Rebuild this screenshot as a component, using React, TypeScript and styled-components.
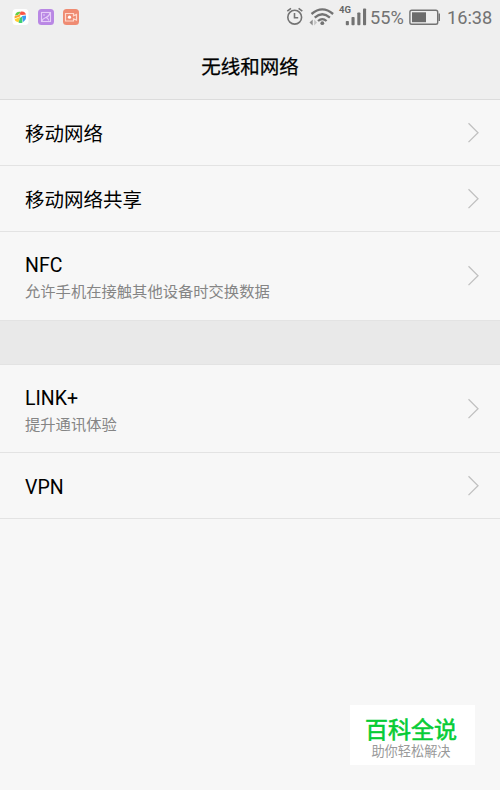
import React from "react";
import styled, { createGlobalStyle } from "styled-components";

const GlobalStyle = createGlobalStyle`
  body {
    margin: 0;
    background: #f7f7f7;
    font-family: Roboto, "Noto Sans CJK SC", sans-serif;
  }
`;

const Screen = styled.div`
  position: relative;
  width: 500px;
  height: 790px;
  overflow: hidden;
  background: #f7f7f7;
`;

const Header = styled.header`
  box-sizing: border-box;
  height: 100px;
  background: #efefef;
  border-bottom: 1px solid #dcdcdc;
`;

const StatusBar = styled.div`
  display: flex;
  justify-content: space-between;
  height: 34px;
  padding: 0 9px 0 12px;
  color: #737373;
`;

const AppIcons = styled.div`
  display: flex;
  gap: 9px;
  padding-top: 9px;

  svg {
    display: block;
  }
`;

const Indicators = styled.div`
  display: flex;
  align-items: flex-start;

  svg {
    display: block;
  }
`;

const StatusText = styled.span<{ $width: number }>`
  width: ${(p) => p.$width}px;
  font-size: 18.2px;
  line-height: 35px;
  white-space: nowrap;
`;

const Title = styled.h1`
  margin: 0;
  font-size: 19.5px;
  font-weight: 400;
  -webkit-text-stroke: 0.25px #000;
  line-height: 28px;
  padding-top: 20px;
  text-align: center;
  color: #000;
`;

const Row = styled.div<{ $height: number }>`
  box-sizing: border-box;
  display: flex;
  align-items: center;
  justify-content: space-between;
  height: ${(p) => p.$height}px;
  padding: 0 20px 0 25px;
  border-bottom: 1px solid #e3e3e3;
`;

const Labels = styled.div`
  display: flex;
  flex-direction: column;
  padding-top: 5px;
`;

const Label = styled.span`
  font-size: 19.5px;
  line-height: 26px;
  color: #000;
`;

const Hint = styled.span`
  margin-top: 1px;
  font-size: 15.3px;
  line-height: 24px;
  color: #858585;
`;

const SectionGap = styled.div`
  box-sizing: border-box;
  height: 44px;
  background: #e9e9e9;
  border-bottom: 1px solid #e3e3e3;
`;

const Badge = styled.aside`
  position: absolute;
  left: 350px;
  top: 705px;
  width: 125px;
  height: 60px;
  background: #fff;
  text-align: center;
`;

const BadgeName = styled.div`
  padding-top: 12px;
  font-size: 23px;
  font-weight: 400;
  -webkit-text-stroke: 0.6px #06cc35;
  line-height: 27px;
  color: #06cc35;
  margin-right: 3px;
`;

const BadgeTagline = styled.div`
  font-size: 13.2px;
  line-height: 16px;
  color: #999;
  margin-right: 3px;
`;

const Chevron = () => (
  <svg width="13" height="22" viewBox="0 0 13 22" fill="none" stroke="#c0c0c0" strokeWidth="1.3">
    <path d="M1.5 1.3 11 10.700 1.5 20.100" />
  </svg>
);

const PinwheelIcon = () => (
  <svg width="17" height="16" viewBox="0 0 17 16">
    <rect x=".5" width="16" height="16" rx="3.5" fill="#fff" />
    <path d="M3 6.500C3.500 3.500 6 2 9 3L6 6Z" fill="#66cf45" />
    <path d="M7 5.500 9 2.500C12 2 13.500 3.500 14 5.500L10 6Z" fill="#fb5446" />
    <path d="M2.700 7 8.500 5.500 8 7.500 2.500 9.500Z" fill="#ffa52c" />
    <path d="M2.700 10.200 8.500 7.700 6.500 13.300C4.300 12.500 3 12 2.700 10.200Z" fill="#ffd02e" />
    <path d="M8 9 10 7.500 10.500 13.500Q8.500 14.500 6.500 13.500Z" fill="#40cf72" />
    <path d="M10 7 14 6.500Q14.500 11 11 13Z" fill="#3c9cf2" />
  </svg>
);

const GalleryIcon = () => (
  <svg width="16" height="16" viewBox="0 0 16 16" fill="none">
    <rect width="16" height="16" rx="3.5" fill="#b987e4" />
    <g stroke="#e6cdf8" strokeWidth="1.1">
      <rect x="3.500" y="3.500" width="9" height="9" />
      <path d="M3.500 12.500C4.500 9.500 6.500 9 8 8.500Q11 7.500 12 4M8.500 9Q10.500 9.500 10.700 11.500M5 6H7" />
    </g>
  </svg>
);

const RecorderIcon = () => (
  <svg width="16" height="16" viewBox="0 0 16 16" fill="none">
    <rect width="16" height="16" rx="3.5" fill="#ef8b72" />
    <path
      d="M2.500 4.500H10.500V6.800L13.500 5.500V11L10.500 9.800V12H2.500Z"
      stroke="#ffd9cd"
      strokeWidth="1.2"
    />
    <circle cx="6.500" cy="8.200" r="1.600" fill="#fff" />
  </svg>
);

const StatusIcons = () => (
  <svg width="84" height="32" viewBox="286 0 84 32" fill="none" stroke="#737373">
    <circle cx="294.700" cy="17.200" r="6.900" strokeWidth="1.600" />
    <path d="M294.500 13V17.700H298.200M287.300 11.200 291 8.400M302.300 11.200 298.600 8.400" strokeWidth="1.600" />
    <g strokeWidth="2.300">
      <path d="M311.500 14Q322.300 4.800 333.100 14" />
      <path d="M314.700 17.600Q322.300 11 329.900 17.600" />
      <path d="M318 21Q322.300 17.200 326.600 21" />
    </g>
    <circle cx="322.300" cy="23.200" r="1.900" fill="#737373" stroke="none" />
    <path d="M312.700 19.500V25.500L309.500 22.500Z" fill="#8c8c8c" stroke="none" />
    <path d="M314.200 19.500V25.500L317 22.500Z" fill="#c4c4c4" stroke="none" />
    <text x="339" y="12.500" fill="#666" stroke="none" fontFamily="Roboto" fontSize="9.500" fontWeight="700">
      4G
    </text>
    <g fill="#737373" stroke="none">
      <rect x="345.800" y="21" width="3.100" height="4.300" rx=".8" />
      <rect x="351.500" y="17" width="3.100" height="8.300" rx=".8" />
      <rect x="357.300" y="12.500" width="3.100" height="12.800" rx=".8" />
      <rect x="363" y="8.500" width="3.100" height="16.800" rx=".8" />
    </g>
  </svg>
);

const BatteryIcon = () => (
  <svg width="38" height="32" viewBox="409 0 38 32" fill="none">
    <rect x="409.900" y="10.200" width="27.800" height="14" rx="1.800" stroke="#737373" strokeWidth="1.400" />
    <rect x="412" y="12.300" width="14" height="9.900" fill="#6c6c6c" />
    <path d="M438.500 13.500H440V21H438.500Z" fill="#737373" />
  </svg>
);

const groups = [
  [
    { label: "移动网络", height: 66 },
    { label: "移动网络共享", height: 66 },
    { label: "NFC", hint: "允许手机在接触其他设备时交换数据", height: 89 },
  ],
  [
    { label: "LINK+", hint: "提升通讯体验", height: 88 },
    { label: "VPN", height: 66 },
  ],
];

export default function App() {
  return (
    <Screen>
      <GlobalStyle />
      <Header>
        <StatusBar>
          <AppIcons>
            <PinwheelIcon />
            <GalleryIcon />
            <RecorderIcon />
          </AppIcons>
          <Indicators>
            <StatusIcons />
            <StatusText $width={39}>55%</StatusText>
            <BatteryIcon />
            <StatusText $width={44}>16:38</StatusText>
          </Indicators>
        </StatusBar>
        <Title>无线和网络</Title>
      </Header>
      {groups.map((rows, index) => (
        <React.Fragment key={index}>
          {index > 0 && <SectionGap />}
          {rows.map((row) => (
            <Row key={row.label} $height={row.height}>
              <Labels>
                <Label>{row.label}</Label>
                {row.hint && <Hint>{row.hint}</Hint>}
              </Labels>
              <Chevron />
            </Row>
          ))}
        </React.Fragment>
      ))}
      <Badge>
        <BadgeName>百科全说</BadgeName>
        <BadgeTagline>助你轻松解决</BadgeTagline>
      </Badge>
    </Screen>
  );
}
